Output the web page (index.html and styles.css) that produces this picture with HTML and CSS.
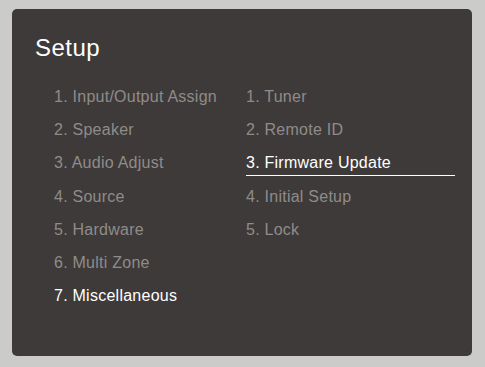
FILE: index.html
```html
<!DOCTYPE html>
<html lang="en">
<head>
  <meta charset="UTF-8">
  <title>Setup</title>
  <link rel="stylesheet" href="styles.css">
</head>
<body>

  <div class="panel">
    <!-- Title -->
    <h1 class="title">Setup</h1>

    <div class="menu">
      <!-- Main categories -->
      <ul class="column">
        <li class="item">1. Input/Output Assign</li>
        <li class="item">2. Speaker</li>
        <li class="item">3. Audio Adjust</li>
        <li class="item">4. Source</li>
        <li class="item">5. Hardware</li>
        <li class="item">6. Multi Zone</li>
        <li class="item active">7. Miscellaneous</li>
      </ul>

      <!-- Sub items -->
      <ul class="column">
        <li class="item">1. Tuner</li>
        <li class="item">2. Remote ID</li>
        <li class="item selected">3. Firmware Update</li>
        <li class="item">4. Initial Setup</li>
        <li class="item">5. Lock</li>
      </ul>
    </div>
  </div>

</body>
</html>
```

FILE: styles.css
```css
body {
  margin: 0;
  background: #cbcbc9;
  font-family: 'Liberation Sans', Arial, sans-serif;
  width: 485px;
  height: 367px;
  overflow: hidden;
}

.panel {
  margin: 9px 0 0 12px;
  width: 460px;
  height: 347px;
  box-sizing: border-box;
  padding: 25px 0 0 23px;
  background: #3e3a39;
  border-radius: 5px;
}

.title {
  margin: 0;
  font-size: 24px;
  line-height: 28px;
  font-weight: normal;
  letter-spacing: 0.5px;
  color: #fff;
}

.menu {
  display: grid;
  grid-template-columns: 192px 209px;
  margin: 14px 0 0 19px;
}

.column {
  list-style: none;
  margin: 0;
  padding: 0;
}

.item {
  font-size: 16px;
  line-height: 23.2px;
  letter-spacing: 0.25px;
  padding: 9px 0 0;
  border-bottom: 1px solid transparent;
  color: #8e8c8b;
  white-space: nowrap;
}

.item.active,
.item.selected {
  color: #fff;
}

.item.selected {
  border-bottom-color: #fff;
}
```
